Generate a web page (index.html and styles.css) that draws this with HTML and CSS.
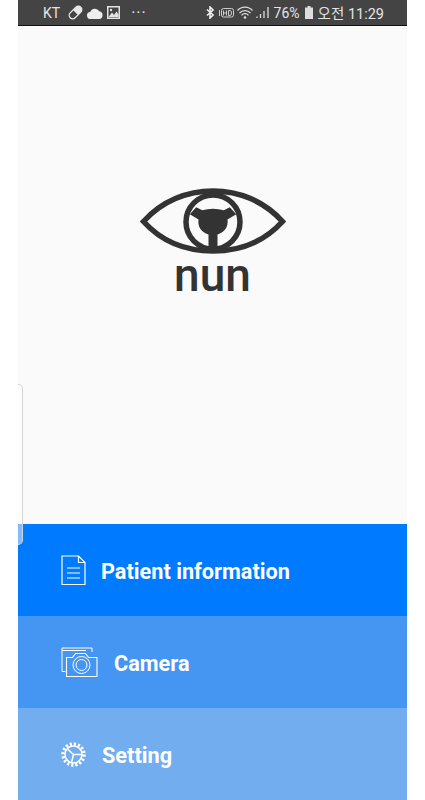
FILE: index.html
```html
<!DOCTYPE html>
<html lang="en">
<head>
    <meta charset="UTF-8">
    <title>nun</title>
    <link rel="stylesheet" href="styles.css">
</head>
<body>
<div class="screen">
    <div class="status">
        <span class="carrier">KT</span>
        <svg class="st-pill" width="15" height="15" viewBox="0 0 15 15">
            <g transform="rotate(-45 7.5 7.5)">
                <rect x="0" y="4" width="15" height="7" rx="3.5" fill="none" stroke="#e8e8e8" stroke-width="1.3"/>
                <path d="M7.5 4h4a3.500 3.500 0 0 1 0 7h-4z" fill="#e8e8e8"/>
            </g>
        </svg>
        <svg class="st-cloud" width="16" height="12" viewBox="0 0 16 12">
            <path d="M3.800 12a3.500 3.500 0 0 1-.6-7A5 5 0 0 1 12.300 4.300 3.900 3.900 0 0 1 12.300 12z" fill="#eee"/>
        </svg>
        <svg class="st-pic" width="13" height="13" viewBox="0 0 13 13">
            <path d="M0 0h13v13H0z" fill="#e4e4e4"/>
            <path d="M1.500 1.500h10v10h-10z" fill="#444"/>
            <path d="M1.500 11l3.500-4.500 2 2.500 2.500-3.500 2 3v2.500z" fill="#e4e4e4"/>
            <circle cx="4" cy="4" r="1.200" fill="#e4e4e4"/>
        </svg>
        <span class="dots">···</span>
        <div class="status-right">
            <svg class="st-bt" width="8" height="13" viewBox="0 0 8 13">
                <path d="M1 3.500l6 5.500L4 12V1l3 3L1 9.500" fill="none" stroke="#eee" stroke-width="1.600"/>
            </svg>
            <svg class="st-hd" width="15" height="12" viewBox="0 0 15 12">
                <rect x="2.500" y="1.500" width="12" height="8.500" rx="2" fill="none" stroke="#ccc"/>
                <path d="M4.500 3.500v5M7.500 3.500v5M4.500 6h3M9.500 3.500v5h1.500q1.500 0 1.500-2.500t-1.500-2.500z" fill="none" stroke="#ccc"/>
                <path d="M.5 3v6" stroke="#ccc"/>
            </svg>
            <svg class="st-wifi" width="16" height="13" viewBox="0 0 16 13">
                <path d="M.5 4.500a10 10 0 0 1 15 0M2.500 7a7.500 7.500 0 0 1 11 0M4.500 9.300a4.500 4.500 0 0 1 7 0" fill="none" stroke="#ddd" stroke-width="1.200"/>
                <circle cx="8" cy="11.500" r="1.300" fill="#ddd"/>
            </svg>
            <svg class="st-signal" width="14" height="13" viewBox="0 0 14 13">
                <path d="M1 12v-1.500M4.500 12V8M8 12V5M12 12V1" stroke="#ddd" stroke-width="1.300"/>
            </svg>
            <span class="pct">76%</span>
            <svg class="st-batt" width="8" height="13" viewBox="0 0 8 13">
                <path d="M2.500 0h3v1.500H8V13H0V1.500h2.500z" fill="#ddd"/>
            </svg>
            <span class="clock">오전 11:29</span>
        </div>
    </div>

    <div class="hero">
        <svg class="eye" width="146" height="68" viewBox="0 0 146 68">
            <path d="M3.500 33.500C22 13 47 3 73 3S124 13 142.500 33.500C124 54 99 63 73 63S22 54 3.500 33.500z" fill="none" stroke="#333" stroke-width="5.500"/>
            <circle cx="73" cy="34" r="27" fill="none" stroke="#333" stroke-width="5.500"/>
            <path d="M49.800 26.300L56.200 19.300L62.200 22.300Q73 19 83.800 22.300L89.800 19.300L96.200 26.300L87.500 31.500C88.500 39 84.500 44.500 77.500 46.500V60H68.500V46.500C61.500 44.500 57.500 39 58.500 31.500z" fill="#333"/>
        </svg>
        <div class="brand">nun</div>
    </div>

    <div class="menu">
        <div class="item item-patient">
            <svg class="ic-doc" width="25" height="31" viewBox="0 0 25 31">
                <path d="M1 1h16.500L24 7.500V29.500H1zM17.500 1v6.500H24M6 13h13M6 18h13M6 23h13" fill="none" stroke="#fff" stroke-width="1.200"/>
            </svg>
            <span class="label">Patient information</span>
        </div>
        <div class="item item-camera">
            <svg class="ic-cam" width="37" height="31" viewBox="0 0 37 31">
                <path d="M4.500 24.500H1V1h30v4" fill="none" stroke="#fff" stroke-width="1"/>
                <path d="M1 3.500h24" stroke="#fff" stroke-width="1" fill="none"/>
                <path d="M5.500 29.500V10.500h6l3-4h10l3 4h8.500v19z" fill="none" stroke="#fff" stroke-width="1.100"/>
                <circle cx="20.500" cy="18" r="8.500" fill="none" stroke="#fff" stroke-width="1"/>
                <circle cx="20.500" cy="18" r="5.500" fill="none" stroke="#fff" stroke-width="1"/>
            </svg>
            <span class="label">Camera</span>
        </div>
        <div class="item item-setting">
            <svg class="ic-gear" width="25" height="25" viewBox="0 0 25 25">
                <circle cx="12.500" cy="12.500" r="10.500" fill="none" stroke="#fff" stroke-width="3.400" stroke-dasharray="2.200 1.925"/>
                <circle cx="12.500" cy="12.500" r="8.500" fill="none" stroke="#fff" stroke-width="1.500"/>
                <path d="M12.500 12.500L7 7.500M12.500 12.500H20.500M12.500 12.500L10.500 20.500" fill="none" stroke="#fff" stroke-width="1.500"/>
            </svg>
            <span class="label">Setting</span>
        </div>
    </div>

    <div class="handle"></div>
</div>
</body>
</html>
```

FILE: styles.css
```css
body{
    margin: 0;
    background: #fff;
    font-family: Roboto, "Liberation Sans", sans-serif;
}
.screen{
    position: relative;
    width: 389px;
    height: 800px;
    margin: 0 18px;
    display: flex;
    flex-direction: column;
    overflow: hidden;
    background: #fafafa;
}

/* status bar */
.status{
    height: 25px;
    flex: none;
    display: flex;
    align-items: center;
    padding: 0 23px 0 25px;
    background: #444;
    border-bottom: 1px solid #111;
    color: #e4e4e4;
    font-size: 14px;
}
.carrier{
    margin-right: 8px;
}
.st-cloud, .st-pic{
    margin-left: 4px;
}
.dots{
    margin-left: 11px;
    font-size: 16px;
    letter-spacing: 1px;
}
.status-right{
    margin-left: auto;
    display: flex;
    align-items: center;
}
.st-hd{
    margin-left: 5px;
}
.st-wifi{
    margin-left: 3px;
}
.st-signal{
    margin-left: 3px;
}
.pct{
    margin: 0 5px 0 4px;
    font-size: 14px;
}
.clock{
    margin-left: 5px;
    font-family: Roboto, "Noto Sans CJK KR", sans-serif;
    font-size: 14.500px;
}

/* logo */
.hero{
    flex: 1;
    display: flex;
    flex-direction: column;
    align-items: center;
    padding-top: 162px;
}
.eye{
    display: block;
}
.brand{
    margin-top: -2px;
    height: 42px;
    color: #333;
    font-size: 46px;
    line-height: 42px;
    font-weight: 500;
}

/* menu */
.menu{
    flex: none;
}
.item{
    height: 92px;
    display: flex;
    align-items: center;
    padding-left: 43px;
    color: #fff;
    font-size: 21.700px;
    font-weight: 700;
}
.label{
    padding-top: 2px;
}
.ic-doc{
    margin-right: 15px;
}
.ic-cam{
    margin-right: 16px;
}
.ic-gear{
    margin-right: 16px;
}
.item-patient{
    background: #007aff;
}
.item-camera{
    background: #4596f3;
}
.item-setting{
    background: #72adf0;
}

.handle{
    position: absolute;
    left: 0;
    top: 384px;
    width: 4px;
    height: 159px;
    border: 1px solid #d4d4d4;
    border-left: none;
    border-radius: 0 5px 5px 0;
    background: rgba(255,255,255,.5);
}
```
